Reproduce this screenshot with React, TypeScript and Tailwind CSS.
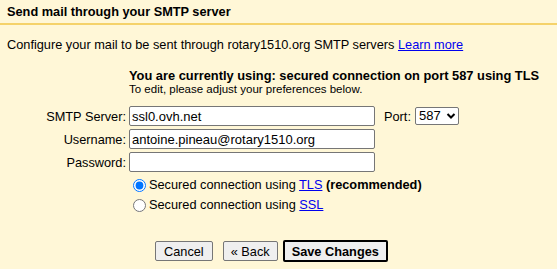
import { useState } from "react";

export default function App() {
  const [secure, setSecure] = useState("tls");
  return (
    <div className="w-[557px] h-[269px] bg-[#fff7d7] text-black font-['Liberation_Sans',Arial,sans-serif] overflow-hidden">
      <div className="h-[25px] px-[7px] flex items-center border-b-2 border-[#f5d26a]">
        <h1 className="text-[12.75px] font-bold">Send mail through your SMTP server</h1>
      </div>
      <p className="mt-[10px] px-[7px] text-[12.75px]">
        Configure your mail to be sent through rotary1510.org SMTP servers{" "}
        <a href="#" className="text-[#0000ee] underline">Learn more</a>
      </p>

      <div className="mt-[14px] pl-[129px]">
        <div className="text-[12.85px] font-bold leading-[15px]">
          You are currently using: secured connection on port 587 using TLS
        </div>
        <div className="text-[11.5px] leading-[12px]">To edit, please adjust your preferences below.</div>
      </div>

      <div className="mt-[11px] flex flex-col gap-[3px] text-[12.75px]">
        <div className="flex items-center">
          <label className="w-[126px] text-right">SMTP Server:</label>
          <input
            defaultValue="ssl0.ovh.net"
            className="ml-[3px] w-[246px] h-[20px] px-[2px] border border-[#767676] rounded-[2px] bg-white text-[13px] outline-none"
          />
          <label className="ml-[9px]">Port:</label>
          <div className="ml-[4px] h-[18px] w-[44px] flex items-center justify-between pl-[3px] pr-[2px] border border-[#767676] rounded-[2px] bg-white text-[13px]">
            <span>587</span>
            <svg width="10" height="8" viewBox="0 0 10 8">
              <path d="M1.5 2 L5 5.5 L8.5 2" fill="none" stroke="#000" strokeWidth="2" />
            </svg>
          </div>
        </div>
        <div className="flex items-center">
          <label className="w-[126px] text-right">Username:</label>
          <input
            defaultValue="antoine.pineau@rotary1510.org"
            className="ml-[3px] w-[246px] h-[20px] px-[2px] border border-[#767676] rounded-[2px] bg-white text-[13px] outline-none"
          />
        </div>
        <div className="flex items-center">
          <label className="w-[126px] text-right">Password:</label>
          <input
            type="password"
            className="ml-[3px] w-[246px] h-[20px] px-[2px] border border-[#767676] rounded-[2px] bg-white text-[13px] outline-none"
          />
        </div>
      </div>

      <div className="mt-[5px] pl-[133px] flex flex-col gap-[4px] text-[12.75px] leading-[16px]">
        <label className="flex items-center gap-[3px]">
          <input
            type="radio"
            name="sec"
            checked={secure === "tls"}
            onChange={() => setSecure("tls")}
            className="w-[13px] h-[13px] m-0 accent-[#0075ff]"
          />
          <span>
            Secured connection using <a href="#" className="text-[#0000ee] underline">TLS</a>{" "}
            <b>(recommended)</b>
          </span>
        </label>
        <label className="flex items-center gap-[3px]">
          <input
            type="radio"
            name="sec"
            checked={secure === "ssl"}
            onChange={() => setSecure("ssl")}
            className="w-[13px] h-[13px] m-0 accent-[#0075ff]"
          />
          <span>
            Secured connection using <a href="#" className="text-[#0000ee] underline">SSL</a>
          </span>
        </label>
      </div>

      <div className="mt-[27px] pl-[155px] flex items-center text-[12.75px]">
        <button className="h-[20px] px-[8px] border border-[#767676] rounded-[2px] bg-[#efefef]">Cancel</button>
        <button className="ml-[10px] h-[20px] px-[7px] border border-[#767676] rounded-[2px] bg-[#efefef]">« Back</button>
        <button className="ml-[5px] h-[22px] px-[7px] border-2 border-black rounded-[2px] bg-[#efefef] font-bold">Save Changes</button>
      </div>
    </div>
  );
}
